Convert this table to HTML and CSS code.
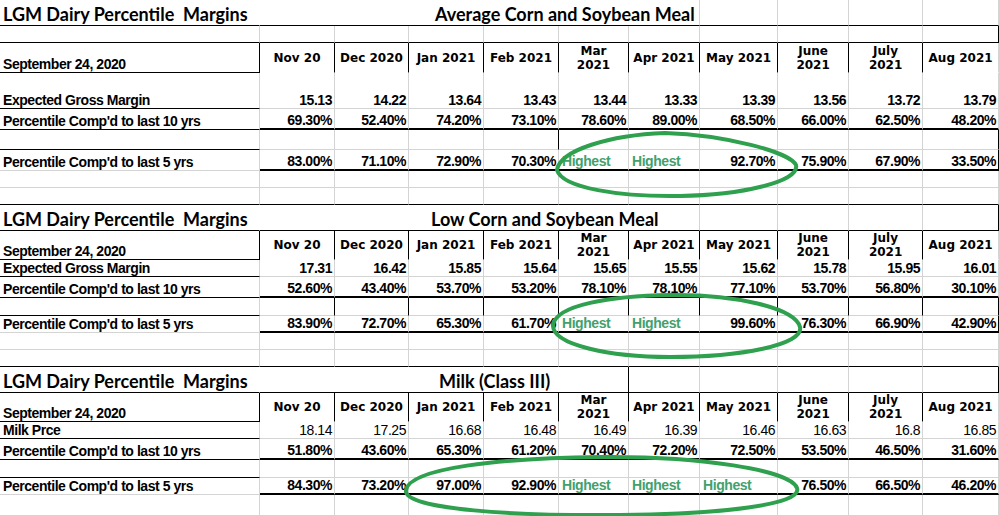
FILE: index.html
```html
<!DOCTYPE html>
<html>
<head>
<meta charset="utf-8">
<title>LGM Dairy Percentile Margins</title>
<link rel="stylesheet" href="styles.css">
</head>
<body>
<table class="sheet">
<colgroup>
<col class="ca"><col class="cb"><col class="cc"><col class="cd"><col class="ce"><col class="cf"><col class="cg"><col class="ch"><col class="ci"><col class="cj"><col class="ck">
</colgroup>
<tbody>
<!-- Section 1 -->
<tr class="h26"><td class="ttl nr bb">LGM Dairy Percentile&nbsp; Margins</td><td colspan="6" class="ttl t1 bb">Average Corn and Soybean Meal</td><td class="bb"></td><td class="bb"></td><td class="bb"></td><td class="bb"></td></tr>
<tr class="h17"><td class="bb"></td><td class="bb"></td><td class="bb"></td><td class="bb"></td><td class="bb"></td><td class="bb"></td><td class="bb"></td><td class="bb"></td><td class="bb"></td><td class="bb"></td><td class="bb rb"></td></tr>
<tr class="h30"><td class="lbl rb bb">September 24, 2020</td><td class="mh rb nb">Nov 20</td><td class="mh rb nb">Dec 2020</td><td class="mh rb nb">Jan 2021</td><td class="mh rb nb">Feb 2021</td><td class="mh rb nb">Mar<br>2021</td><td class="mh rb nb">Apr 2021</td><td class="mh rb nb">May 2021</td><td class="mh rb nb">June<br>2021</td><td class="mh rb nb">July<br>2021</td><td class="mh nb">Aug 2021</td></tr>
<tr class="h36"><td class="lbl bb">Expected Gross Margin</td><td>15.13</td><td>14.22</td><td>13.64</td><td>13.43</td><td>13.44</td><td>13.33</td><td>13.39</td><td>13.56</td><td>13.72</td><td>13.79</td></tr>
<tr class="h21"><td class="lbl bb">Percentile Comp'd to last 10 yrs</td><td class="tb">69.30%</td><td class="tb">52.40%</td><td class="tb">74.20%</td><td class="tb">73.10%</td><td class="tb">78.60%</td><td class="tb">89.00%</td><td class="tb">68.50%</td><td class="tb">66.00%</td><td class="tb">62.50%</td><td class="tb">48.20%</td></tr>
<tr class="h20"><td class="bb"></td><td></td><td></td><td></td><td class="rb"></td><td></td><td></td><td></td><td></td><td></td><td class="rb"></td></tr>
<tr class="h21"><td class="lbl">Percentile Comp'd to last 5 yrs</td><td class="tb">83.00%</td><td class="tb">71.10%</td><td class="tb">72.90%</td><td class="tb">70.30%</td><td class="tb hi">Highest</td><td class="tb hi">Highest</td><td class="tb">92.70%</td><td class="tb">75.90%</td><td class="tb">67.90%</td><td class="tb rb">33.50%</td></tr>
<tr class="h17"><td></td><td></td><td></td><td></td><td></td><td></td><td></td><td></td><td></td><td></td><td></td></tr>
<tr class="h17"><td class="bb"></td><td class="bb"></td><td class="bb"></td><td class="bb"></td><td class="bb"></td><td class="bb"></td><td class="bb"></td><td class="bb"></td><td class="bb"></td><td class="bb"></td><td class="bb"></td></tr>
<!-- Section 2 -->
<tr class="h26"><td class="ttl nr bb">LGM Dairy Percentile&nbsp; Margins</td><td colspan="6" class="ttl t2 bb">Low Corn and Soybean Meal</td><td class="bb"></td><td class="bb"></td><td class="bb"></td><td class="bb rb"></td></tr>
<tr class="h29"><td class="lbl rb bb">September 24, 2020</td><td class="mh rb nb">Nov 20</td><td class="mh rb nb">Dec 2020</td><td class="mh rb nb">Jan 2021</td><td class="mh rb nb">Feb 2021</td><td class="mh rb nb">Mar<br>2021</td><td class="mh rb nb">Apr 2021</td><td class="mh rb nb">May 2021</td><td class="mh rb nb">June<br>2021</td><td class="mh rb nb">July<br>2021</td><td class="mh nb">Aug 2021</td></tr>
<tr class="h17"><td class="lbl bb">Expected Gross Margin</td><td>17.31</td><td>16.42</td><td>15.85</td><td>15.64</td><td>15.65</td><td>15.55</td><td>15.62</td><td>15.78</td><td>15.95</td><td>16.01</td></tr>
<tr class="h21"><td class="lbl bb">Percentile Comp'd to last 10 yrs</td><td class="tb">52.60%</td><td class="tb">43.40%</td><td class="tb">53.70%</td><td class="tb">53.20%</td><td class="tb">78.10%</td><td class="tb">78.10%</td><td class="tb">77.10%</td><td class="tb">53.70%</td><td class="tb">56.80%</td><td class="tb">30.10%</td></tr>
<tr class="h18"><td class="bb"></td><td class="rb"></td><td class="rb"></td><td class="rb"></td><td class="rb"></td><td class="rb"></td><td class="rb"></td><td class="rb"></td><td class="rb"></td><td class="rb"></td><td class="rb"></td></tr>
<tr class="h17"><td class="lbl">Percentile Comp'd to last 5 yrs</td><td class="tb">83.90%</td><td class="tb">72.70%</td><td class="tb">65.30%</td><td class="tb">61.70%</td><td class="tb hi">Highest</td><td class="tb hi">Highest</td><td class="tb">99.60%</td><td class="tb">76.30%</td><td class="tb">66.90%</td><td class="tb rb">42.90%</td></tr>
<tr class="h17"><td></td><td></td><td></td><td></td><td></td><td></td><td></td><td></td><td></td><td></td><td></td></tr>
<tr class="h17"><td class="bb"></td><td class="bb"></td><td class="bb"></td><td class="bb"></td><td class="bb"></td><td class="bb"></td><td class="bb"></td><td class="bb"></td><td class="bb"></td><td class="bb"></td><td class="bb"></td></tr>
<!-- Section 3 -->
<tr class="h26"><td class="ttl nr bb">LGM Dairy Percentile&nbsp; Margins</td><td colspan="5" class="ttl t3 bb rb">Milk (Class III)</td><td class="bb"></td><td class="bb"></td><td class="bb"></td><td class="bb"></td><td class="bb rb"></td></tr>
<tr class="h29"><td class="lbl rb bb">September 24, 2020</td><td class="mh rb nb">Nov 20</td><td class="mh rb nb">Dec 2020</td><td class="mh rb nb">Jan 2021</td><td class="mh rb nb">Feb 2021</td><td class="mh rb nb">Mar<br>2021</td><td class="mh rb nb">Apr 2021</td><td class="mh rb nb">May 2021</td><td class="mh rb nb">June<br>2021</td><td class="mh rb nb">July<br>2021</td><td class="mh nb">Aug 2021</td></tr>
<tr class="h17"><td class="lbl bb">Milk Prce</td><td class="reg">18.14</td><td class="reg">17.25</td><td class="reg">16.68</td><td class="reg">16.48</td><td class="reg">16.49</td><td class="reg">16.39</td><td class="reg">16.46</td><td class="reg">16.63</td><td class="reg">16.8</td><td class="reg">16.85</td></tr>
<tr class="h21"><td class="lbl bb">Percentile Comp'd to last 10 yrs</td><td class="tb">51.80%</td><td class="tb">43.60%</td><td class="tb">65.30%</td><td class="tb">61.20%</td><td class="tb">70.40%</td><td class="tb">72.20%</td><td class="tb">72.50%</td><td class="tb">53.50%</td><td class="tb">46.50%</td><td class="tb">31.60%</td></tr>
<tr class="h18"><td class="bb"></td><td></td><td></td><td></td><td></td><td></td><td></td><td></td><td></td><td></td><td></td></tr>
<tr class="h17"><td class="lbl">Percentile Comp'd to last 5 yrs</td><td class="tb">84.30%</td><td class="tb">73.20%</td><td class="tb">97.00%</td><td class="tb">92.90%</td><td class="tb hi">Highest</td><td class="tb hi">Highest</td><td class="tb hi">Highest</td><td class="tb">76.50%</td><td class="tb">66.50%</td><td class="tb">46.20%</td></tr>
<tr class="h21"><td></td><td></td><td></td><td></td><td></td><td></td><td></td><td></td><td></td><td></td><td></td></tr>
</tbody>
</table>
<svg class="ink" width="999" height="516" viewBox="0 0 999 516" aria-hidden="true">
<path d="M557,170 C560,150 610,135 665,133 C725,135 790,152 796,165 C800,182 740,195 680,196 C620,197 562,188 557,170 Z"/>
<path d="M553,325 C556,305 610,296 670,295 C735,294 795,308 800,327 C804,345 740,357 670,357 C610,357 552,345 553,325 Z"/>
<path d="M406,490 C410,468 500,458 600,457 C700,456 790,470 797,488 C803,505 720,514 620,515 C520,516 402,510 406,490 Z"/>
</svg>
</body>
</html>
```
FILE: styles.css
```css
html, body {
  margin: 0;
  padding: 0;
  background: #fff;
}
body {
  position: relative;
  width: 999px;
  height: 516px;
  overflow: hidden;
}
.sheet {
  border-collapse: separate;
  border-spacing: 0;
  table-layout: fixed;
  width: 999px;
  font-family: "Liberation Sans", Arial, sans-serif;
  font-size: 14px;
  font-weight: bold;
  letter-spacing: -0.45px;
  color: #000;
}
.ca { width: 260px; }
.cb { width: 75px; }
.cc { width: 74px; }
.cd { width: 75px; }
.ce { width: 75px; }
.cf { width: 70px; }
.cg { width: 71px; }
.ch { width: 78px; }
.ci { width: 71px; }
.cj { width: 74px; }
.ck { width: 76px; }

.h17 { height: 17px; }
.h18 { height: 18px; }
.h20 { height: 20px; }
.h21 { height: 21px; }
.h26 { height: 26px; }
.h29 { height: 29px; }
.h30 { height: 30px; }
.h36 { height: 36px; }

.sheet td {
  box-sizing: border-box;
  border: 0 solid #d4d4d4;
  border-right-width: 1px;
  border-bottom-width: 1px;
  padding: 0 2px 0 2px;
  vertical-align: bottom;
  text-align: right;
  white-space: nowrap;
  line-height: 15px;
  overflow: visible;
}
.sheet .rb { border-right-color: #000; }
.sheet .bb { border-bottom-color: #000; }
.sheet .nr { border-right-color: transparent; }
.sheet .nb { border-bottom-color: transparent; }
.sheet .tb { border-bottom: 2px solid #000; }

.sheet .lbl {
  text-align: left;
  padding-left: 3px;
}
.sheet .mh {
  font-family: "DejaVu Sans", Verdana, sans-serif;
  font-size: 12px;
  letter-spacing: 0;
  line-height: 14px;
  text-align: center;
  vertical-align: middle;
  white-space: nowrap;
}
.sheet .hi {
  color: #43a06e;
  text-align: left;
  padding-left: 3px;
}
.sheet .reg { font-weight: normal; }

.sheet .ttl {
  font-family: Lato, "Liberation Sans", sans-serif;
  font-size: 18px;
  letter-spacing: 0;
  line-height: 22px;
  text-align: left;
  padding-left: 3px;
}
.sheet .t1 { padding-left: 175px; }
.sheet .t2 { padding-left: 171px; }
.sheet .t3 { padding-left: 179px; }

.ink {
  position: absolute;
  left: 0;
  top: 0;
  pointer-events: none;
  fill: none;
  stroke: #2fa04e;
  stroke-width: 4;
  stroke-linecap: round;
}
```
